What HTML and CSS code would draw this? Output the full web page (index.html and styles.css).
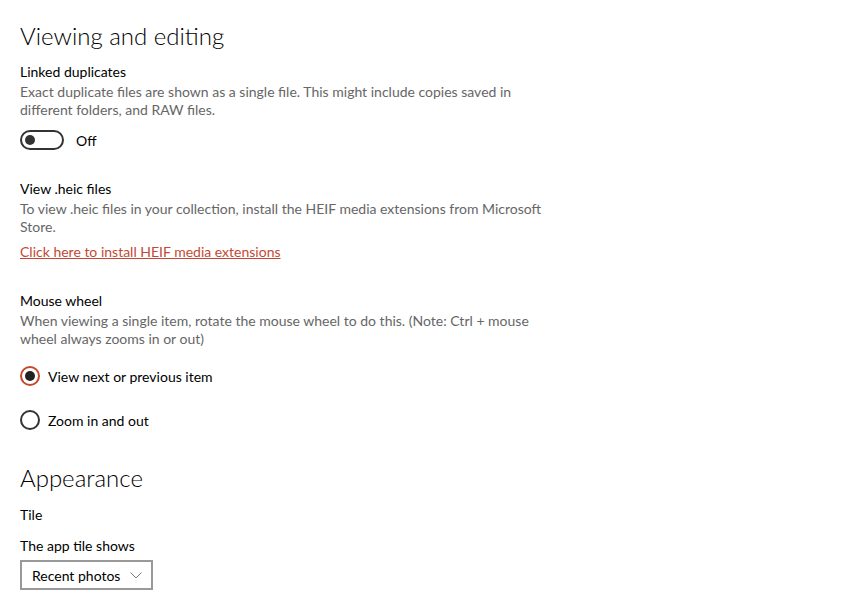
FILE: index.html
```html
<html>
  <head>
    <title>Settings</title>
    <meta name="viewport" content="width=device-width, initial-scale=1">
    <link rel="stylesheet" href="styles.css">
  </head>
  <body>
    <div class="page">
      <h2 class="section-title">Viewing and editing</h2>

      <div class="setting">
        <div class="label">Linked duplicates</div>
        <div class="desc">Exact duplicate files are shown as a single file. This might include copies saved in different folders, and RAW files.</div>
        <div class="toggle-row">
          <span class="toggle"><span class="knob"></span></span>
          <span class="toggle-text">Off</span>
        </div>
      </div>

      <div class="setting">
        <div class="label">View .heic files</div>
        <div class="desc">To view .heic files in your collection, install the HEIF media extensions from Microsoft Store.</div>
        <a class="link" href="#">Click here to install HEIF media extensions</a>
      </div>

      <div class="setting">
        <div class="label">Mouse wheel</div>
        <div class="desc">When viewing a single item, rotate the mouse wheel to do this. (Note: Ctrl + mouse wheel always zooms in or out)</div>
        <div class="radios">
          <div class="radio-row">
            <span class="radio checked"></span>
            <span class="radio-text">View next or previous item</span>
          </div>
          <div class="radio-row">
            <span class="radio"></span>
            <span class="radio-text">Zoom in and out</span>
          </div>
        </div>
      </div>

      <h2 class="section-title appearance">Appearance</h2>
      <div class="label sub">Tile</div>
      <div class="label sub">The app tile shows</div>
      <div class="select">
        <span>Recent photos</span>
        <svg width="12" height="7" viewBox="0 0 12 7"><path d="M0.5 0.5 L6 6 L11.5 0.5" fill="none" stroke="#777" stroke-width="1"/></svg>
      </div>
    </div>
  </body>
</html>
```
FILE: styles.css
```css
* { box-sizing: border-box; }
body {
  margin: 0;
  background: #fff;
  font-family: Lato, "Open Sans", sans-serif;
  font-size: 14px;
  color: #000;
}

.page {
  padding: 20px 20px 0 20px;
}

.section-title {
  margin: 0;
  font-size: 24px;
  font-weight: 300;
  line-height: 32px;
  color: #000;
}

.label {
  line-height: 20px;
  margin-top: 10px;
}

.label.sub {
  margin-top: 11px;
}

.desc {
  color: #666;
  line-height: 18px;
  margin-top: 1px;
  max-width: 528px;
}

.setting + .setting {
  margin-top: 29px;
}

.toggle-row {
  display: flex;
  align-items: center;
  margin-top: 11px;
  height: 20px;
}

.toggle {
  width: 44px;
  height: 20px;
  border: 2px solid #333;
  border-radius: 10px;
  position: relative;
}

.knob {
  position: absolute;
  left: 3px;
  top: 3px;
  width: 10px;
  height: 10px;
  border-radius: 50%;
  background: #333;
}

.toggle-text {
  margin-left: 12px;
}

.link {
  display: block;
  width: max-content;
  margin-top: 6px;
  margin-bottom: 1px;
  line-height: 20px;
  color: #c24a34;
  text-decoration: underline;
}

.radios {
  margin-top: 18px;
  display: flex;
  flex-direction: column;
  gap: 24px;
}

.radio-row {
  display: flex;
  align-items: center;
  height: 20px;
}

.radio {
  width: 20px;
  height: 20px;
  border: 2px solid #333;
  border-radius: 50%;
  display: flex;
  align-items: center;
  justify-content: center;
}

.radio.checked {
  border-color: #c4472f;
}

.radio.checked::after {
  content: '';
  width: 10px;
  height: 10px;
  border-radius: 50%;
  background: #222;
}

.radio-text {
  margin-left: 8px;
}

.appearance {
  margin-top: 32px;
}

.select {
  margin-top: 4px;
  width: 133px;
  height: 30px;
  border: 2px solid #999;
  display: flex;
  align-items: center;
  justify-content: space-between;
  padding: 0 9px 0 10px;
}
```
